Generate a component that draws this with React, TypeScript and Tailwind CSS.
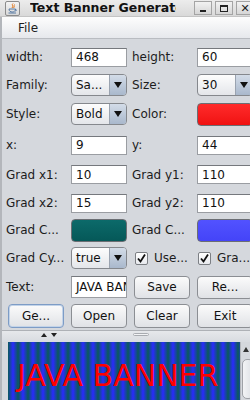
import React from "react";

const font = "font-['DejaVu_Sans',sans-serif]";

function Label({ t }: { t: string }) {
  return <div className="w-[63px] shrink-0 text-[12px] text-[#1c1c1c] whitespace-nowrap">{t}</div>;
}

function Field({ v, h = "h-[19px]" }: { v: string; h?: string }) {
  return (
    <div className="w-[63px] shrink-0">
      <div
        className={`ml-[2px] w-[56px] ${h} bg-white border border-[#9a9da2] border-t-[#75787d] flex items-center pl-[4px] text-[12px] text-[#111] overflow-hidden whitespace-nowrap`}
      >
        {v}
      </div>
    </div>
  );
}

function Combo({ v }: { v: string }) {
  return (
    <div className="w-[63px] shrink-0">
      <div className="ml-[2px] w-[56px] h-[22px] rounded-[4px] border border-[#85888d] bg-gradient-to-b from-[#fdfdfd] to-[#e4e6ea] flex overflow-hidden">
        <div className="flex-1 flex items-center pl-[4px] text-[12px] text-[#111] whitespace-nowrap">{v}</div>
        <div className="w-[17px] border-l border-[#9aa3b0] bg-gradient-to-b from-[#d3dce8] to-[#a9b8cc] flex items-center justify-center">
          <svg width="8" height="6" viewBox="0 0 8 6">
            <path d="M0 0 H8 L4 6 Z" fill="#111" />
          </svg>
        </div>
      </div>
    </div>
  );
}

function Swatch({ c }: { c: string }) {
  return (
    <div className="w-[63px] shrink-0">
      <div className={`ml-[2px] w-[56px] h-[23px] rounded-[4px] border border-[#6b6e73] ${c}`} />
    </div>
  );
}

function Btn({ t, focus = false, h = "h-[24px]" }: { t: string; focus?: boolean; h?: string }) {
  return (
    <div className="w-[63px] shrink-0">
      <div
        className={`ml-[2px] w-[56px] ${h} rounded-[4px] border ${
          focus ? "border-[#7d9cc6] shadow-[inset_0_0_0_1px_#c2d3e8]" : "border-[#8b8e93]"
        } bg-gradient-to-b from-[#fbfbfb] to-[#e0e2e6] flex items-center justify-center text-[12px] text-[#111] whitespace-nowrap`}
      >
        {t}
      </div>
    </div>
  );
}

function Check({ t }: { t: string }) {
  return (
    <div className="w-[63px] shrink-0 flex items-center">
      <div className="ml-[3px] w-[13px] h-[13px] border border-[#7c7f84] bg-gradient-to-b from-white to-[#e8eaee] rounded-[2px] flex items-center justify-center">
        <svg width="11" height="11" viewBox="0 0 11 11">
          <path d="M2 5.5 L4.5 8.5 L9 1.5" stroke="#111" strokeWidth="1.8" fill="none" />
        </svg>
      </div>
      <div className="ml-[6px] text-[12px] text-[#1c1c1c] whitespace-nowrap">{t}</div>
    </div>
  );
}

function Row({ h, children }: { h: string; children: React.ReactNode }) {
  return <div className={`flex items-center ${h}`}>{children}</div>;
}

function JavaIcon() {
  return (
    <div className="w-[15px] h-[15px] border border-[#8c8c8c] bg-gradient-to-b from-[#f4f4f4] to-[#d8d8d8] rounded-[2px] flex items-center justify-center">
      <svg width="11" height="11" viewBox="0 0 11 11">
        <path d="M6 0.5 C4 2 7 3 5 5 M7.5 1.5 C6.5 3 8 3.5 6.5 5" stroke="#e0761c" strokeWidth="1" fill="none" />
        <path d="M2 6 H8.5 C8.5 8 7 9 5.2 9 C3.5 9 2 8 2 6 Z" fill="none" stroke="#4b6f9c" strokeWidth="0.9" />
        <path d="M8.5 6.5 C10 6.5 10 8 8 8" stroke="#4b6f9c" strokeWidth="0.8" fill="none" />
        <path d="M1.5 10 H9" stroke="#4b6f9c" strokeWidth="0.9" />
      </svg>
    </div>
  );
}

function WinBtn({ children }: { children: React.ReactNode }) {
  return (
    <div className="w-[18px] h-[14px] border border-[#a4a4a4] bg-gradient-to-b from-[#f2f2f2] to-[#d6d6d6] flex items-center justify-center">
      {children}
    </div>
  );
}

export default function App() {
  return (
    <div className={`w-[250px] h-[400px] overflow-hidden bg-[#d5d8dd] ${font} relative`}>
      <div className="w-[262px]">
        {/* Title bar */}
        <div className="h-[17px] flex items-center bg-gradient-to-b from-[#ececec] to-[#d9d9d9] border-b border-[#c4c4c4]">
          <div className="ml-[5px] shrink-0">
            <JavaIcon />
          </div>
          <div className="ml-[10px] w-[146px] shrink-0 overflow-hidden whitespace-nowrap text-[12.5px] font-bold text-[#111] leading-[16px]">
            Text Banner Generator
          </div>
          <div className="ml-[18px] flex gap-[3px] items-center shrink-0">
            <WinBtn>
              <div className="w-[6px] h-[2px] bg-[#222] mt-[6px]" />
            </WinBtn>
            <WinBtn>
              <div className="w-[8px] h-[7px] border border-[#222] border-t-2" />
            </WinBtn>
            <WinBtn>
              <span className="text-[11px] font-bold text-[#222] leading-none">✕</span>
            </WinBtn>
          </div>
        </div>
        {/* Menu bar */}
        <div className="h-[22px] flex items-center bg-gradient-to-b from-[#fdfdfd] to-[#e6e8ec] border-b border-[#b9bcc1] border-l-[2px] border-l-[#b3b6bb]">
          <div className="ml-[16px] text-[12px] text-[#1c1c1c]">File</div>
        </div>
        {/* Form */}
        <div className="border-l-[2px] border-[#b3b6bb] pl-[4px] pt-[4px]">
          <Row h="h-[28px]">
            <Label t="width:" />
            <Field v="468" />
            <Label t="height:" />
            <Field v="60" />
          </Row>
          <Row h="h-[27px]">
            <Label t="Family:" />
            <Combo v="Sa..." />
            <Label t="Size:" />
            <Combo v="30" />
          </Row>
          <Row h="h-[32px]">
            <Label t="Style:" />
            <Combo v="Bold" />
            <Label t="Color:" />
            <Swatch c="bg-gradient-to-b from-[#ff2a2a] to-[#f01010]" />
          </Row>
          <Row h="h-[30px]">
            <Label t="x:" />
            <Field v="9" />
            <Label t="y:" />
            <Field v="44" />
          </Row>
          <Row h="h-[29px]">
            <Label t="Grad x1:" />
            <Field v="10" />
            <Label t="Grad y1:" />
            <Field v="110" />
          </Row>
          <Row h="h-[28px]">
            <Label t="Grad x2:" />
            <Field v="15" />
            <Label t="Grad y2:" />
            <Field v="110" />
          </Row>
          <Row h="h-[26px]">
            <Label t="Grad C..." />
            <Swatch c="bg-gradient-to-b from-[#0c6a6a] to-[#055858]" />
            <Label t="Grad C..." />
            <Swatch c="bg-gradient-to-b from-[#5252ff] to-[#4444f8]" />
          </Row>
          <Row h="h-[30px]">
            <Label t="Grad Cy..." />
            <Combo v="true" />
            <Check t="Use..." />
            <Check t="Gra..." />
          </Row>
          <Row h="h-[28px]">
            <Label t="Text:" />
            <Field v="JAVA BANNER" h="h-[22px]" />
            <Btn t="Save" h="h-[23px]" />
            <Btn t="Re..." h="h-[23px]" />
          </Row>
          <Row h="h-[29px]">
            <Btn t="Ge..." focus />
            <Btn t="Open" />
            <Btn t="Clear" />
            <Btn t="Exit" />
          </Row>
        </div>
        {/* Split divider */}
        <div className="h-[12px] border-l-[2px] border-[#b3b6bb] flex">
          <div className="flex-1 border-t border-[#aeb1b6] bg-gradient-to-b from-[#e6e8eb] to-[#d8dbe0] flex items-start">
            <div className="ml-[39px] mt-[2px] flex gap-[4px]">
              <svg width="6" height="4" viewBox="0 0 6 4">
                <path d="M0 4 L3 0 L6 4 Z" fill="#222" />
              </svg>
              <svg width="6" height="4" viewBox="0 0 6 4">
                <path d="M0 0 L6 0 L3 4 Z" fill="#222" />
              </svg>
            </div>
            <div className="ml-[76px] mt-[2px] w-[16px] h-[3px] rounded-full border border-[#a8abb0] bg-[#f2f3f5]" />
          </div>
        </div>
        {/* Banner area */}
        <div className="border-l-[2px] border-[#b3b6bb] pl-[6px] flex">
          <div className="w-[232px] h-[60px] bg-[repeating-linear-gradient(90deg,#0a5a5a_0px,#2a2aff_5px,#0a5a5a_10px)] overflow-hidden">
            <svg width="232" height="60" viewBox="0 0 232 60">
              <text x="9" y="44" fontFamily="DejaVu Sans" fontSize="30" fill="#ff0000">
                JAVA BANNER
              </text>
            </svg>
          </div>
          <div className="w-[14px] h-[60px] bg-[#d5d8dd] border-l border-[#b5b8bd] flex flex-col items-start">
            <svg className="ml-[2px] mt-[5px]" width="6" height="5" viewBox="0 0 6 5">
              <path d="M0 5 L3 0 L6 5 Z" fill="#333" />
            </svg>
            <div className="mt-[7px] ml-[1px] w-[12px] h-[40px] rounded-[5px] border border-[#9fa2a7] bg-gradient-to-r from-[#f3f4f6] to-[#dde0e4]" />
          </div>
        </div>
      </div>
    </div>
  );
}
